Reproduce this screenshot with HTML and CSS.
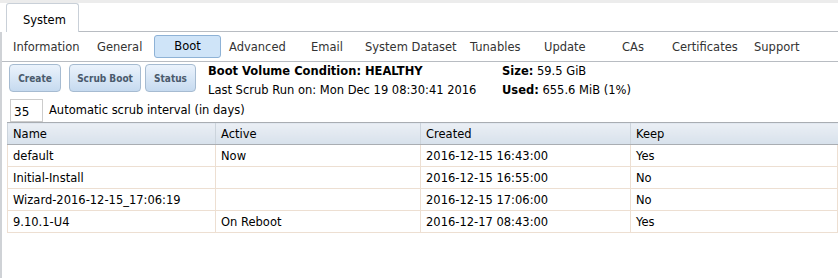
FILE: index.html
```html
<!DOCTYPE html>
<html lang="en">
<head>
    <meta charset="UTF-8">
    <title>System - Boot</title>
    <link rel="stylesheet" href="styles.css">
</head>
<body>
    <div class="topbar"></div>
    <div class="tabstrip">
        <div class="tab">System</div>
        <div class="tabfill"></div>
    </div>
    <div class="main">
        <div class="subnav">
            <span>Information</span>
            <span>General</span>
            <span><span class="current">Boot</span></span>
            <span>Advanced</span>
            <span>Email</span>
            <span>System Dataset</span>
            <span>Tunables</span>
            <span>Update</span>
            <span>CAs</span>
            <span>Certificates</span>
            <span>Support</span>
        </div>
        <div class="toolbar">
            <div class="buttons">
                <button class="btn create">Create</button>
                <button class="btn scrub">Scrub Boot</button>
                <button class="btn status">Status</button>
            </div>
            <div class="info">
                <div><b>Boot Volume Condition: HEALTHY</b></div>
                <div>Last Scrub Run on: Mon Dec 19 08:30:41 2016</div>
            </div>
            <div class="info">
                <div><b>Size:</b> 59.5 GiB</div>
                <div><b>Used:</b> 655.6 MiB (1%)</div>
            </div>
        </div>
        <div class="interval">
            <input type="text" value="35">
            <span>Automatic scrub interval (in days)</span>
        </div>
        <table class="grid">
            <thead>
                <tr><th>Name</th><th>Active</th><th>Created</th><th>Keep</th></tr>
            </thead>
            <tbody>
                <tr><td>default</td><td>Now</td><td>2016-12-15 16:43:00</td><td>Yes</td></tr>
                <tr><td>Initial-Install</td><td></td><td>2016-12-15 16:55:00</td><td>No</td></tr>
                <tr><td>Wizard-2016-12-15_17:06:19</td><td></td><td>2016-12-15 17:06:00</td><td>No</td></tr>
                <tr><td>9.10.1-U4</td><td>On Reboot</td><td>2016-12-17 08:43:00</td><td>Yes</td></tr>
            </tbody>
        </table>
    </div>
</body>
</html>
```

FILE: styles.css
```css
body { margin: 0; font-family: "DejaVu Sans", Verdana, sans-serif; font-size: 11.5px; color: #000; background: #fff; height: 278px; overflow: hidden; }
.topbar { height: 3px; background: #ececec; }
.tabstrip { display: flex; height: 29px; }
.tab { margin-left: 6px; width: 73px; border: 1px solid #c9d0d8; border-bottom: none; border-radius: 3px 3px 0 0; background: #fff; padding: 9px 0 0 16px; box-sizing: border-box; font-size: 11.5px; }
.tabfill { flex: 1; border-bottom: 1px solid #b8bcc2; }
.main { border-left: 2px solid #cfd2d6; height: 246px; }
.subnav { display: grid; grid-template-columns: 84px 57px 75px 82px 54px 105px 74px 78px 50px 82px auto; align-items: center; height: 29px; padding-left: 11px; border-bottom: 1px solid #b8bcc2; color: #333; }
.current { display: inline-block; width: 65px; height: 21px; line-height: 21px; text-align: center; background: #cfe4f8; border: 1px solid #8eb2d6; border-radius: 3px; color: #000; }
.toolbar { display: flex; height: 36px; }
.buttons { display: flex; padding: 2px 0 0 7px; width: 199px; }
.btn { height: 28px; font-family: "DejaVu Sans Condensed", "DejaVu Sans", sans-serif; font-size: 10px; font-weight: bold; color: #4a5a6c; background: linear-gradient(#ebf3fc, #c6daef); border: 1px solid #a6bbd1; border-radius: 4px; padding: 0; }
.create { width: 52px; margin-right: 8px; }
.scrub { width: 72px; margin-right: 4px; }
.status { width: 51px; }
.info { width: 294px; padding-top: 0; line-height: 19px; }
.interval { display: flex; align-items: center; height: 24px; padding-left: 8px; }
.interval input { width: 33px; height: 23px; box-sizing: border-box; border: 1px solid #ccc; font-family: inherit; font-size: 12px; padding: 3px 0 0 3px; margin-right: 6px; }
.grid { margin-left: 5px; width: 831px; border-collapse: collapse; table-layout: fixed; }
.grid th { height: 21px; text-align: left; font-weight: normal; padding: 0 0 0 5px; background: linear-gradient(#ebeff5, #d7e1eb); border-top: 1px solid #a9adb2; border-bottom: 1px solid #a9adb2; border-left: 1px solid #ccd4dc; }
.grid th:first-child { width: 202px; }
.grid th:nth-child(2) { width: 199px; }
.grid th:nth-child(3) { width: 204px; }
.grid td { height: 21px; padding: 0 0 0 5px; border: 1px solid #eddfd2; border-top: none; }
```
